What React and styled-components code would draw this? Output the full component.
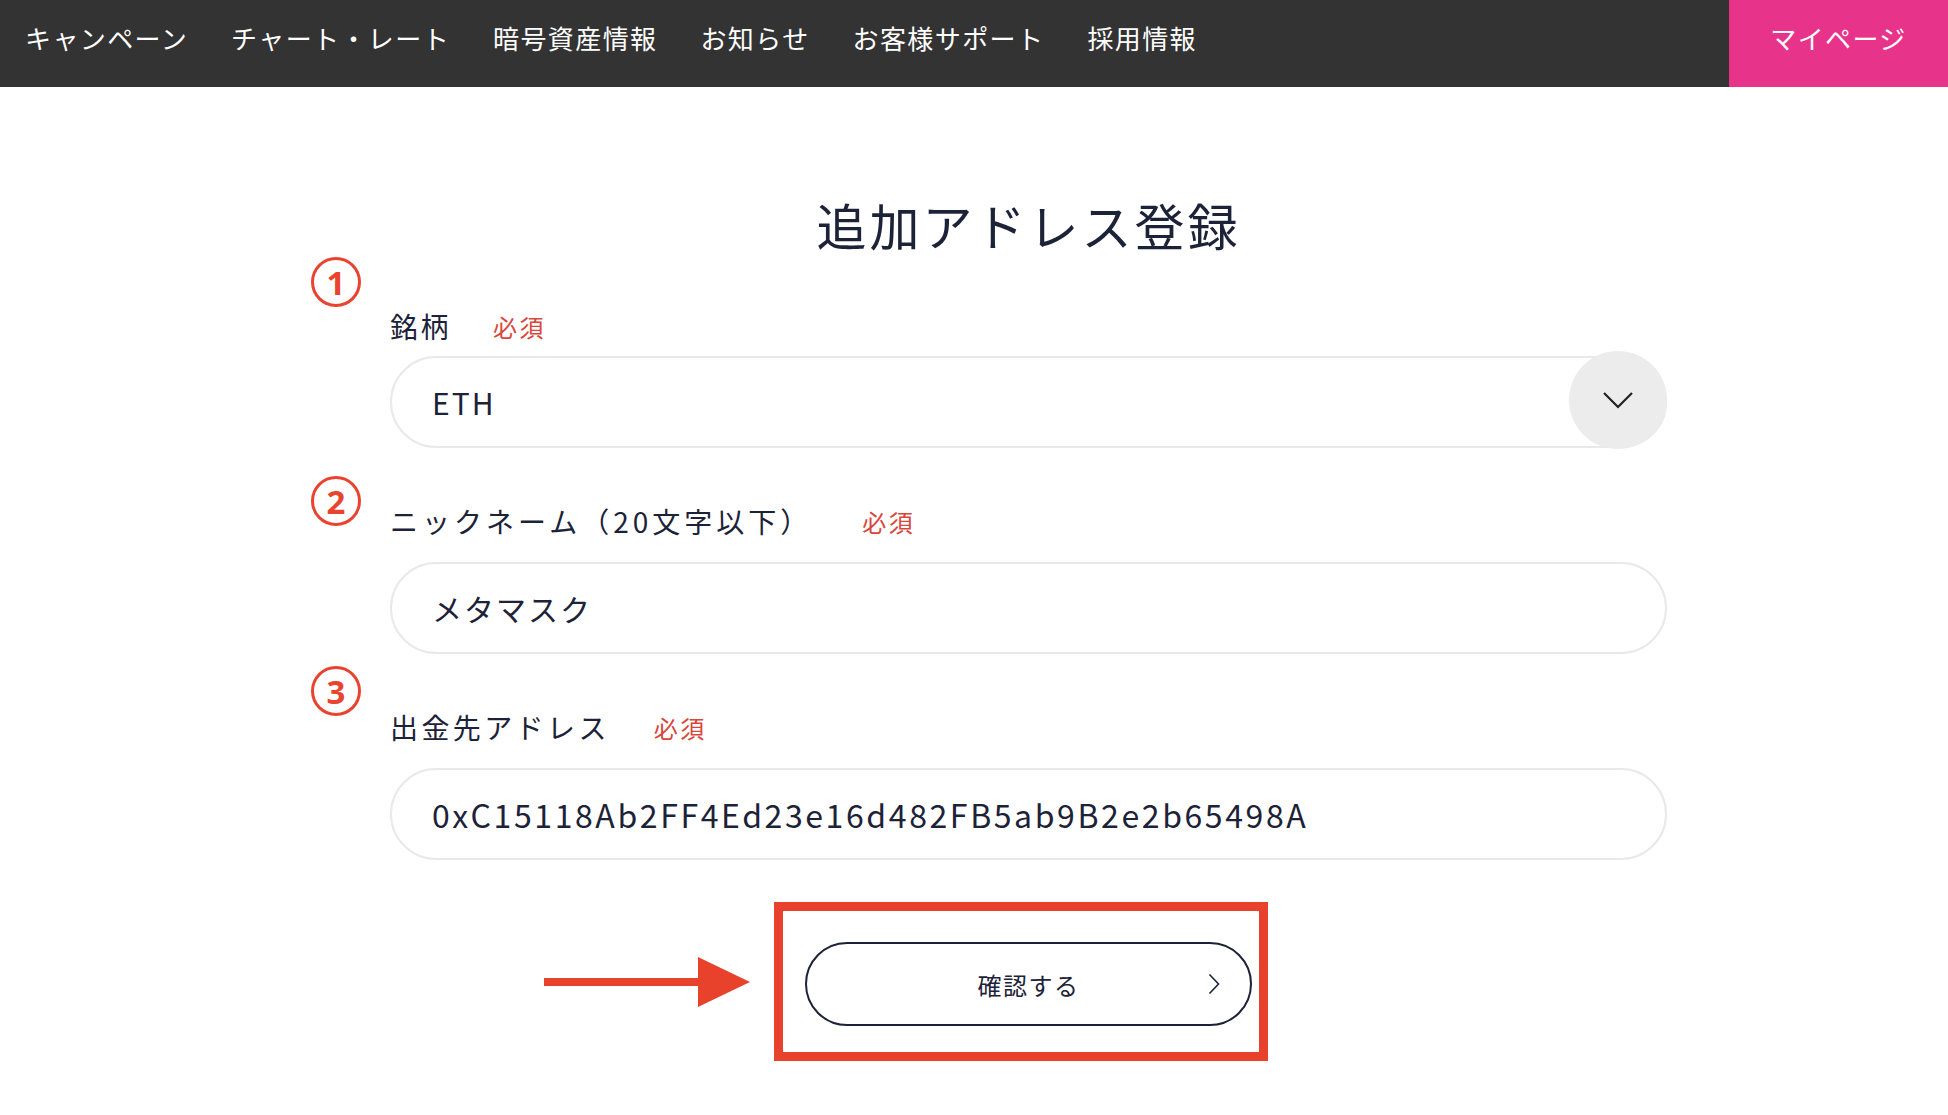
import React from "react";
import styled, { createGlobalStyle } from "styled-components";

const GlobalStyle = createGlobalStyle`
  html, body {
    margin: 0;
    padding: 0;
    background: #ffffff;
  }
  body {
    font-family: "Noto Sans CJK JP", "Noto Sans", sans-serif;
    color: #1c2237;
  }
`;

const NavBar = styled.header`
  display: flex;
  align-items: stretch;
  justify-content: space-between;
  height: 87px;
  background: #333333;
`;

const NavList = styled.nav`
  display: flex;
  align-items: center;
  gap: 43px;
  padding: 0 0 13px 25px;
`;

const NavItem = styled.a`
  color: #ffffff;
  font-size: 26px;
  letter-spacing: 1.4px;
  text-decoration: none;
  white-space: nowrap;
`;

const MyPage = styled.a`
  display: flex;
  align-items: center;
  justify-content: center;
  width: 219px;
  padding-bottom: 13px;
  box-sizing: border-box;
  background: #e8338a;
  color: #ffffff;
  font-size: 26px;
  letter-spacing: 1.4px;
  text-decoration: none;
`;

const Main = styled.main`
  padding-left: 390px;
`;

const Form = styled.div`
  width: 1277px;
  display: flex;
  flex-direction: column;
`;

const Title = styled.h1`
  margin: 103px 0 0;
  text-align: center;
  font-size: 50px;
  font-weight: 400;
  line-height: 68px;
  letter-spacing: 3px;
  color: #1c2237;
`;

const Field = styled.div`
  position: relative;
  display: flex;
  flex-direction: column;
  margin-top: ${(p) => p.$top}px;
`;

const Step = styled.span`
  position: absolute;
  left: -79px;
  top: ${(p) => p.$offset}px;
  width: 44px;
  height: 44px;
  border: 3px solid #e8442f;
  border-radius: 50%;
  display: flex;
  align-items: center;
  justify-content: center;
  color: #e8442f;
  font-family: "Noto Sans", sans-serif;
  font-size: 33px;
  font-weight: 700;
  line-height: 1;
`;

const LabelRow = styled.div`
  display: flex;
  align-items: center;
  gap: ${(p) => p.$gap || 42}px;
  height: 36px;
  margin-bottom: ${(p) => p.$below}px;
`;

const Label = styled.label`
  font-size: 28px;
  letter-spacing: ${(p) => p.$spacing || 2.5}px;
  color: #1c2237;
`;

const Required = styled.span`
  font-size: 24px;
  letter-spacing: 2.5px;
  color: #d8463c;
`;

const Box = styled.div`
  position: relative;
  display: flex;
  align-items: center;
  height: 92px;
  box-sizing: border-box;
  border: 2px solid #e9e9e9;
  border-radius: 46px;
  padding-left: 40px;
  font-size: ${(p) => p.$size || 30}px;
  letter-spacing: ${(p) => p.$spacing || 2}px;
  color: #1c2237;
`;

const ChevronCircle = styled.span`
  position: absolute;
  right: -2px;
  top: -7px;
  width: 98px;
  height: 98px;
  border-radius: 50%;
  background: #ececec;
  display: flex;
  align-items: center;
  justify-content: center;
`;

const ActionRow = styled.div`
  display: flex;
  align-items: center;
  gap: 24px;
  margin-top: 42px;
  padding-left: 154px;
`;

const Highlight = styled.div`
  padding: 31px 7px 26px 22px;
  border: 9px solid #e8412c;
`;

const ConfirmButton = styled.button`
  position: relative;
  width: 447px;
  height: 84px;
  border: 2px solid #1c2237;
  border-radius: 42px;
  background: #ffffff;
  font-family: "Noto Sans CJK JP", sans-serif;
  font-size: 24px;
  letter-spacing: 1.5px;
  color: #1c2237;
  cursor: pointer;
`;

const ButtonChevron = styled.span`
  position: absolute;
  right: 30px;
  top: 50%;
  transform: translateY(-50%);
  display: flex;
`;

function Arrow() {
  return (
    <svg width="206" height="50" viewBox="0 0 206 50">
      <rect x="0" y="21" width="160" height="8" fill="#e8412c" />
      <polygon points="154,0 206,25 154,50" fill="#e8412c" />
    </svg>
  );
}

export default function App() {
  const nav = ["キャンペーン", "チャート・レート", "暗号資産情報", "お知らせ", "お客様サポート", "採用情報"];

  return (
    <>
      <GlobalStyle />
      <NavBar>
        <NavList>
          {nav.map((item) => (
            <NavItem key={item}>{item}</NavItem>
          ))}
        </NavList>
        <MyPage>マイページ</MyPage>
      </NavBar>

      <Main>
        <Form>
          <Title>追加アドレス登録</Title>

          <Field $top={50}>
            <Step $offset={-51}>1</Step>
            <LabelRow $below={12}>
              <Label>銘柄</Label>
              <Required>必須</Required>
            </LabelRow>
            <Box $size={30}>
              ETH
              <ChevronCircle>
                <svg width="32" height="18" viewBox="0 0 32 18">
                  <polyline points="2,2 16,16 30,2" fill="none" stroke="#222222" strokeWidth="2.2" />
                </svg>
              </ChevronCircle>
            </Box>
          </Field>

          <Field $top={55}>
            <Step $offset={-27}>2</Step>
            <LabelRow $below={23} $gap={50}>
              <Label $spacing={4}>ニックネーム（20文字以下）</Label>
              <Required>必須</Required>
            </LabelRow>
            <Box>メタマスク</Box>
          </Field>

          <Field $top={55}>
            <Step $offset={-43}>3</Step>
            <LabelRow $below={23} $gap={44}>
              <Label $spacing={3.4}>出金先アドレス</Label>
              <Required>必須</Required>
            </LabelRow>
            <Box $size={32} $spacing={2.6}>0xC15118Ab2FF4Ed23e16d482FB5ab9B2e2b65498A</Box>
          </Field>

          <ActionRow>
            <Arrow />
            <Highlight>
              <ConfirmButton>
                確認する
                <ButtonChevron>
                  <svg width="12" height="22" viewBox="0 0 12 22">
                    <polyline points="1.5,1.5 10.5,11 1.5,20.5" fill="none" stroke="#1c2237" strokeWidth="1.6" />
                  </svg>
                </ButtonChevron>
              </ConfirmButton>
            </Highlight>
          </ActionRow>
        </Form>
      </Main>
    </>
  );
}
